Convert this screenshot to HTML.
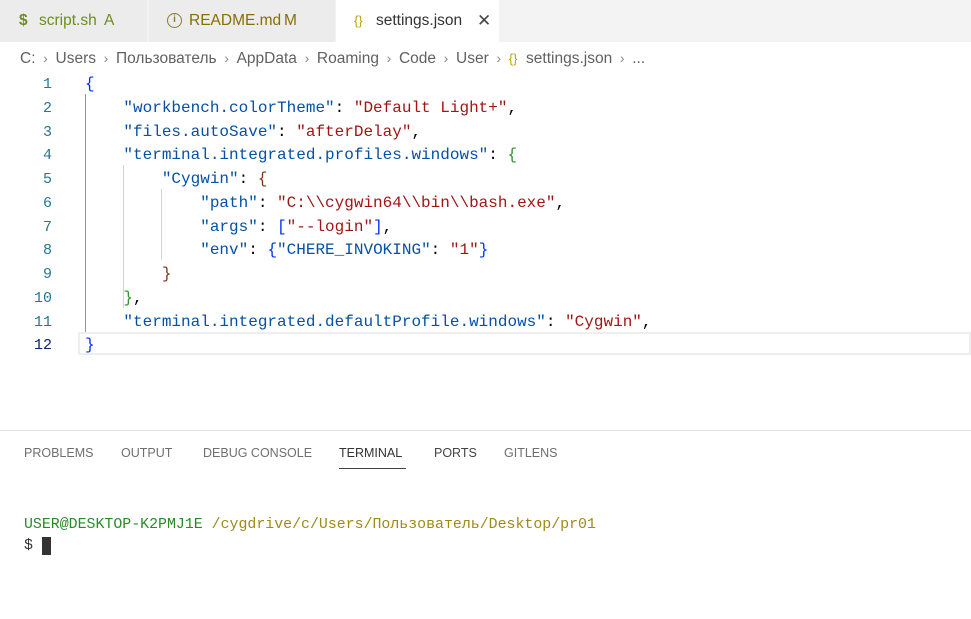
<!DOCTYPE html>
<html><head><meta charset="utf-8"><style>
*{margin:0;padding:0;box-sizing:border-box}
body{width:971px;height:619px;background:#fff;position:relative;overflow:hidden;font-family:"Liberation Sans","DejaVu Sans",sans-serif}
.tabbar{position:absolute;left:0;top:0;width:971px;height:42px;background:#f3f3f3}
.tab{position:absolute;top:0;height:42px;background:#ececec;font-size:15.5px;line-height:42px;color:#333;white-space:nowrap}
.mono{font-family:"Liberation Mono","DejaVu Sans Mono",monospace}
.crumb{position:absolute;left:20px;top:48px;font-size:15.5px;color:#616161;white-space:nowrap;line-height:20px}
.crumb .s{display:inline-block;width:20px;text-align:center;color:#888;font-size:14px}
.code{position:absolute;left:85px;font-size:16px;white-space:pre;color:#000}
.k{color:#0451a5}.st{color:#a31515}.b1{color:#0431fa}.b2{color:#319331}.b3{color:#7b3814}
.guide{position:absolute;width:1px;background:#d3d3d3}
.ptab{position:absolute;top:445px;font-size:12.5px;color:#6f6f6f;line-height:16px}
</style></head><body>
<div class="tabbar"></div>
<div class="tab" style="left:0;width:148px;border-right:1px solid #f3f3f3"><span style="position:absolute;left:19px;color:#6e8d1e;font-weight:bold">$</span><span style="position:absolute;left:39px;color:#6e8d1e">script.sh</span><span style="position:absolute;left:104px;color:#6e8d1e">A</span></div>
<div class="tab" style="left:149px;width:186px"><span style="position:absolute;left:18px;top:13px;width:15px;height:15px;border:1.5px solid #8a7a30;border-radius:50%;font-size:10px;line-height:12px;text-align:center;color:#8a7a30;font-weight:bold">i</span><span style="position:absolute;left:40px;color:#8a6d00">README.md</span><span style="position:absolute;left:135px;color:#8a6d00">M</span></div>
<div class="tab" style="left:336px;width:163px;background:#fff"><span style="position:absolute;left:18px;color:#b9a500;font-size:13px">{}</span><span style="position:absolute;left:40px;color:#333">settings.json</span><span style="position:absolute;left:141px;color:#444;font-size:17px">✕</span></div>
<div class="crumb">C:<span class="s">›</span>Users<span class="s">›</span>Пользователь<span class="s">›</span>AppData<span class="s">›</span>Roaming<span class="s">›</span>Code<span class="s">›</span>User<span class="s">›</span><span style="color:#b9a500;font-size:13px">{}</span>&nbsp; settings.json<span class="s">›</span>...</div>
<div style="position:absolute;left:78px;top:332px;width:893px;height:23px;border:2px solid #eeeeee"></div>
<div class="guide" style="left:85px;top:94px;height:238px;background:#939393"></div>
<div class="guide" style="left:123px;top:165px;height:143px"></div>
<div class="guide" style="left:161px;top:189px;height:71px"></div>
<div class="code mono" style="top:73px;line-height:23.75px"><span class="b1">{</span>
    <span class="k">"workbench.colorTheme"</span>: <span class="st">"Default Light+"</span>,
    <span class="k">"files.autoSave"</span>: <span class="st">"afterDelay"</span>,
    <span class="k">"terminal.integrated.profiles.windows"</span>: <span class="b2">{</span>
        <span class="k">"Cygwin"</span>: <span class="b3">{</span>
            <span class="k">"path"</span>: <span class="st">"C:\\cygwin64\\bin\\bash.exe"</span>,
            <span class="k">"args"</span>: <span class="b1">[</span><span class="st">"--login"</span><span class="b1">]</span>,
            <span class="k">"env"</span>: <span class="b1">{</span><span class="k">"CHERE_INVOKING"</span>: <span class="st">"1"</span><span class="b1">}</span>
        <span class="b3">}</span>
    <span class="b2">}</span>,
    <span class="k">"terminal.integrated.defaultProfile.windows"</span>: <span class="st">"Cygwin"</span>,
<span class="b1">}</span></div>
<div class="mono" style="position:absolute;left:0;top:73px;width:52px;text-align:right;font-size:15px;line-height:23.75px;color:#237893;white-space:pre">1
2
3
4
5
6
7
8
9
10
11
<span style="color:#0b216f">12</span></div>
<div style="position:absolute;left:0;top:430px;width:971px;height:1px;background:#e0e0e0"></div>
<div class="ptab" style="left:24px">PROBLEMS</div>
<div class="ptab" style="left:121px">OUTPUT</div>
<div class="ptab" style="left:203px">DEBUG CONSOLE</div>
<div class="ptab" style="left:339px;color:#333">TERMINAL</div>
<div style="position:absolute;left:339px;top:468px;width:67px;height:1px;background:#424242"></div>
<div class="ptab" style="left:434px;color:#444">PORTS</div>
<div class="ptab" style="left:504px">GITLENS</div>
<div class="mono" style="position:absolute;left:24px;top:515px;font-size:14.9px;line-height:21px;white-space:pre"><span style="color:#2a8a2a">USER@DESKTOP-K2PMJ1E</span> <span style="color:#a0891a">/cygdrive/c/Users/Пользователь/Desktop/pr01</span>
<span style="color:#333">$ </span></div>
<div style="position:absolute;left:42px;top:537px;width:9px;height:18px;background:#333"></div>
</body></html>
